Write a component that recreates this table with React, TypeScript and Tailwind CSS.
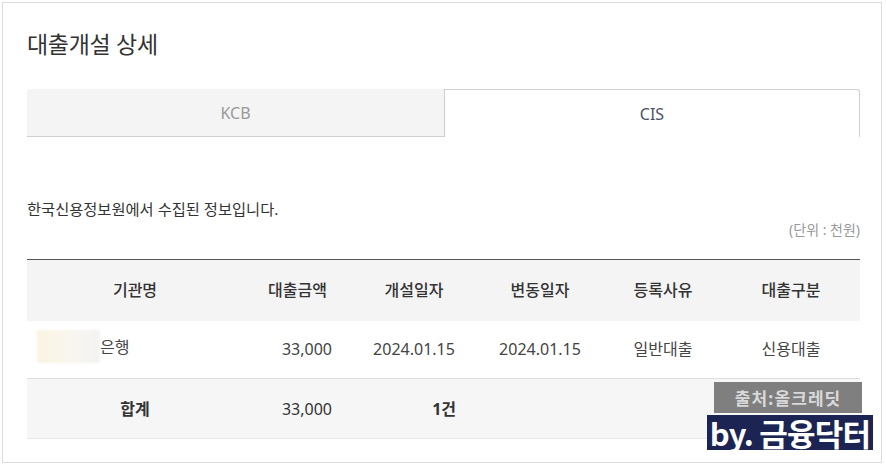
const font = "font-['Noto_Sans','Noto_Sans_CJK_KR',sans-serif]"

const cols = [
  { name: '기관명', w: 'w-[216px]' },
  { name: '대출금액', w: 'w-[109px]' },
  { name: '개설일자', w: 'w-[124px]' },
  { name: '변동일자', w: 'w-[128px]' },
  { name: '등록사유', w: 'w-[118px]' },
  { name: '대출구분', w: 'w-[138px]' },
]

export default function App() {
  return (
    <div className={`w-[886px] h-[466px] bg-white p-[2px] ${font}`}>
      <div className="relative w-[880px] h-[461px] border border-[#dcdcdc] bg-white pl-[24px] pr-[21px] pt-[26px]">
        {/* 제목 */}
        <h1 className="text-[23px] leading-[30px] text-[#333] tracking-[-0.3px]">대출개설 상세</h1>

        {/* 탭 */}
        <div className="mt-[30px] flex h-[48px] text-[16px]">
          <div className="flex w-[417px] items-center justify-center rounded-tl-[3px] border-b border-[#cfcfcf] bg-[#f4f4f4] text-[#999]">
            KCB
          </div>
          <div className="flex flex-1 items-center justify-center rounded-tr-[3px] border-x border-t border-[#cfcfcf] bg-white text-[#4b5263]">
            CIS
          </div>
        </div>

        <p className="mt-[62px] text-[15.3px] leading-[20px] text-[#333]">한국신용정보원에서 수집된 정보입니다.</p>
        <p className="mt-[3px] text-right text-[14px] leading-[16px] text-[#999]">(단위 : 천원)</p>

        {/* 테이블 */}
        <table className="mt-[21px] w-[833px] table-fixed border-collapse text-[16px] text-[#333]">
          <thead>
            <tr className="h-[61px] border-t border-[#555] bg-[#f4f4f4]">
              {cols.map((c) => (
                <th key={c.name} className={`${c.w} font-medium`}>
                  {c.name}
                </th>
              ))}
            </tr>
          </thead>
          <tbody>
            <tr className="h-[58px] border-b border-[#dedede] text-[#444]">
              <td className="pl-[10px]">
                <span className="inline-flex items-center">
                  <span className="h-[33px] w-[63px] bg-gradient-to-r from-[#fbf4e2] via-[#f9f6ee] to-[#f3f3f3] blur-[1px]" />
                  <span className="pt-[2px]">은행</span>
                </span>
              </td>
              <td className="pr-[20px] text-right">33,000</td>
              <td className="text-center">2024.01.15</td>
              <td className="text-center">2024.01.15</td>
              <td className="text-center">일반대출</td>
              <td className="text-center">신용대출</td>
            </tr>
            <tr className="h-[60px] border-b border-[#e8e8e8] bg-[#f6f6f6]">
              <td className="text-center font-bold">합계</td>
              <td className="pr-[20px] text-right">33,000</td>
              <td className="pr-[20px] text-right font-bold">1건</td>
              <td />
              <td />
              <td />
            </tr>
          </tbody>
        </table>

        {/* 워터마크 */}
        <div className="absolute left-[704px] top-[379px] flex flex-col items-center font-['Noto_Sans_CJK_KR',sans-serif]">
          <div className="ml-[-4px] flex h-[31px] w-[148px] items-center justify-center whitespace-nowrap bg-[#7f7f7f] text-[17px] font-bold tracking-[1px] text-[#d9d9d9]">
            출처:올크레딧
          </div>
          <div className="mt-[2px] flex h-[35px] w-[166px] items-center justify-center whitespace-nowrap bg-[#1b2452] text-[31px] font-bold leading-none tracking-[-0.8px] text-white">
            by. 금융닥터
          </div>
        </div>
      </div>
    </div>
  )
}
